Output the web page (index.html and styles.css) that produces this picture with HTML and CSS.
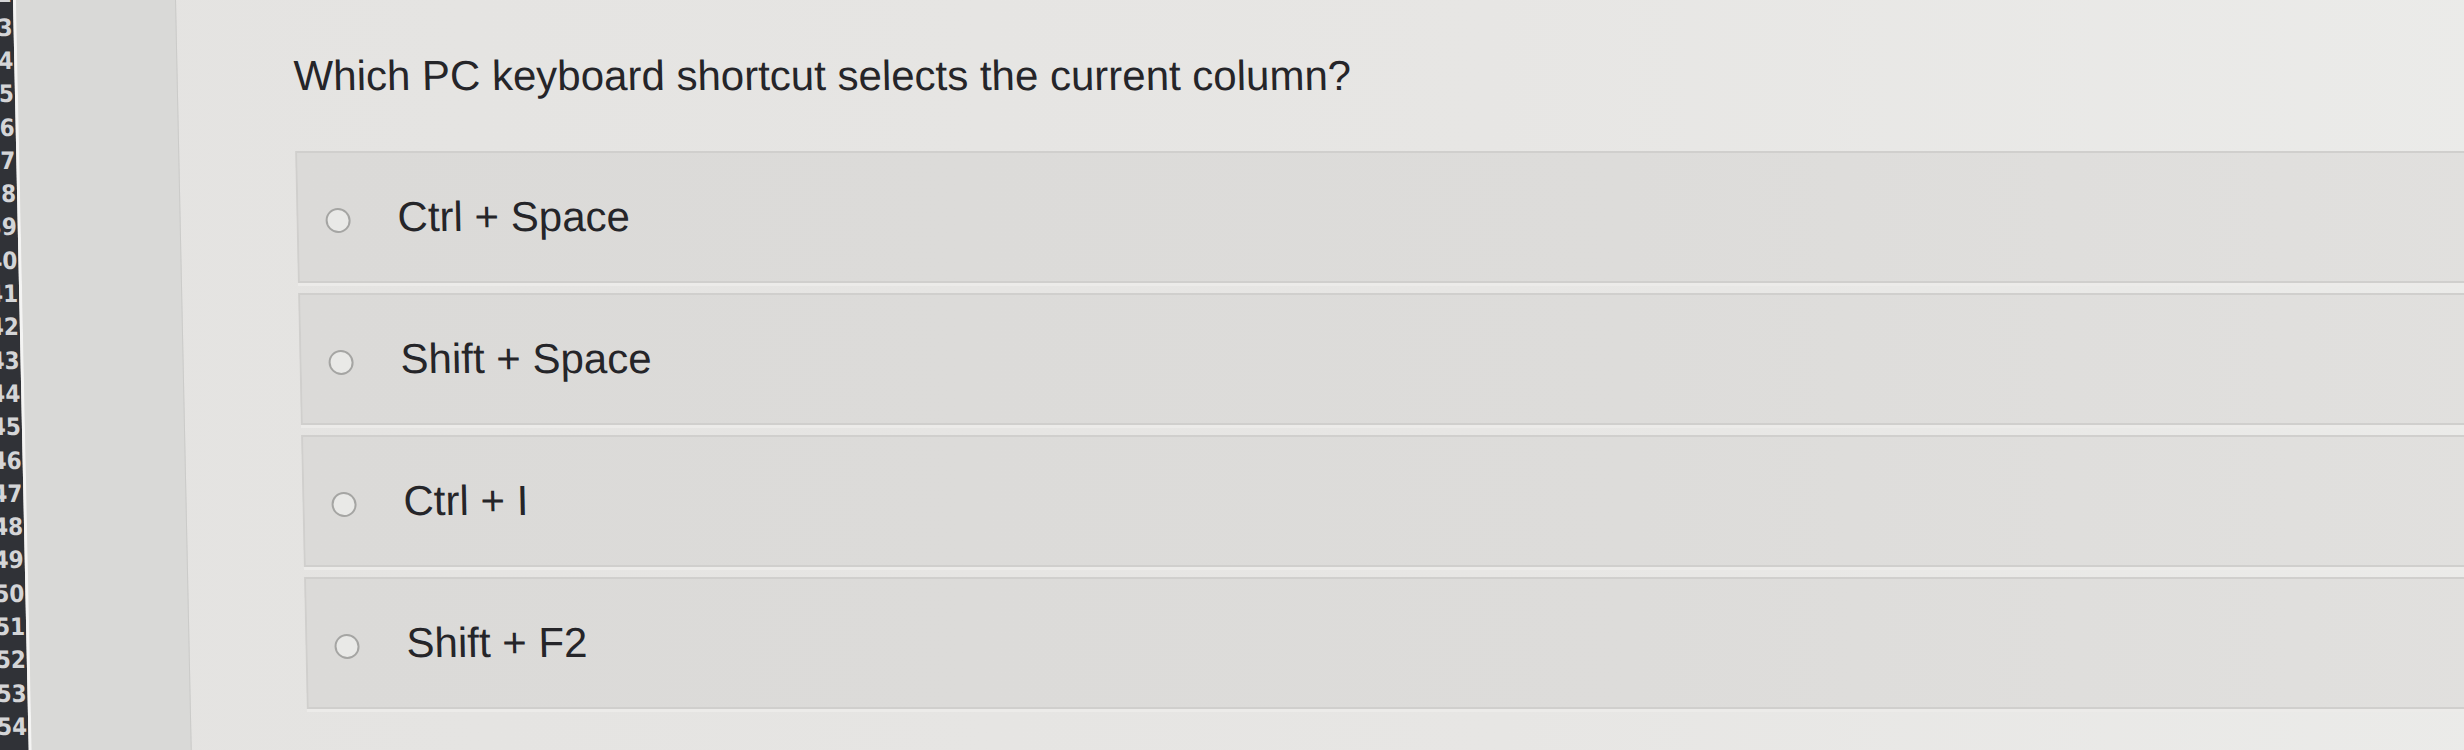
FILE: index.html
```html
<!DOCTYPE html>
<html lang="en">
<head>
<meta charset="utf-8">
<title>Quiz question</title>
<link rel="stylesheet" href="styles.css">
</head>
<body>
<div class="screen">
  <div class="gutter">
    <div class="rownums">
      <span>32</span><span>33</span><span>34</span><span>35</span><span>36</span><span>37</span>
      <span>38</span><span>39</span><span>40</span><span>41</span><span>42</span><span>43</span>
      <span>44</span><span>45</span><span>46</span><span>47</span><span>48</span><span>49</span>
      <span>50</span><span>51</span><span>52</span><span>53</span><span>54</span><span>55</span>
    </div>
  </div>
  <div class="divider"></div>
  <aside class="panel"></aside>
  <main class="content">
    <h1 class="question">Which PC keyboard shortcut selects the current column?</h1>
    <ul class="options">
      <li class="option"><span class="radio"></span><span class="label">Ctrl + Space</span></li>
      <li class="option"><span class="radio"></span><span class="label">Shift + Space</span></li>
      <li class="option"><span class="radio"></span><span class="label">Ctrl + I</span></li>
      <li class="option"><span class="radio"></span><span class="label">Shift + F2</span></li>
    </ul>
  </main>
</div>
</body>
</html>
```
FILE: styles.css
```css
html, body {
  margin: 0;
  height: 100%;
  overflow: hidden;
  background: #e4e3e1;
}

.screen {
  display: flex;
  height: 780px;
  margin-left: -40px;
  width: calc(100% + 80px);
  transform: skewX(1.2deg);
  transform-origin: 0 0;
  background: linear-gradient(90deg, #e4e3e1 0%, #e7e6e4 60%, #ebebe9 100%);
}

.gutter {
  flex: none;
  width: 53px;
  background: #303237;
  overflow: hidden;
}

.rownums {
  margin-top: -21.6px;
  display: flex;
  flex-direction: column;
  align-items: flex-end;
  padding-right: 1px;
  font-family: "DejaVu Sans Condensed", "DejaVu Sans", sans-serif;
  font-stretch: condensed;
  font-weight: bold;
  font-size: 24px;
  line-height: 33.3px;
  color: #d4d5d7;
}

.divider {
  flex: none;
  width: 3px;
  background: #f4f4f3;
}

.panel {
  flex: none;
  width: 159px;
  background: #d9d9d7;
  border-right: 1px solid #cbcbc9;
}

.content {
  flex: 1;
  padding: 52px 0 0 116px;
}

.question {
  margin: 0;
  font-family: "Liberation Sans", Arial, sans-serif;
  font-weight: 400;
  font-size: 42px;
  line-height: 48px;
  color: #252529;
}

.options {
  list-style: none;
  margin: 51px 0 0;
  padding: 0;
  display: flex;
  flex-direction: column;
  gap: 10px;
}

.option {
  box-sizing: border-box;
  height: 132px;
  display: flex;
  align-items: center;
  padding-left: 27px;
  background: linear-gradient(90deg, #dbdad8 0%, #dddcda 60%, #e1e0de 100%);
  border: 2px solid #d0cfcd;
  box-shadow: 0 3px 0 #ecebe9;
}

.radio {
  flex: none;
  box-sizing: border-box;
  width: 25px;
  height: 25px;
  margin-right: 47px;
  margin-top: 6px;
  border-radius: 50%;
  border: 2px solid #a5a5a3;
  background: #e9e9e7;
}

.label {
  font-family: "Liberation Sans", Arial, sans-serif;
  font-size: 42px;
  line-height: 48px;
  color: #252529;
}
```
